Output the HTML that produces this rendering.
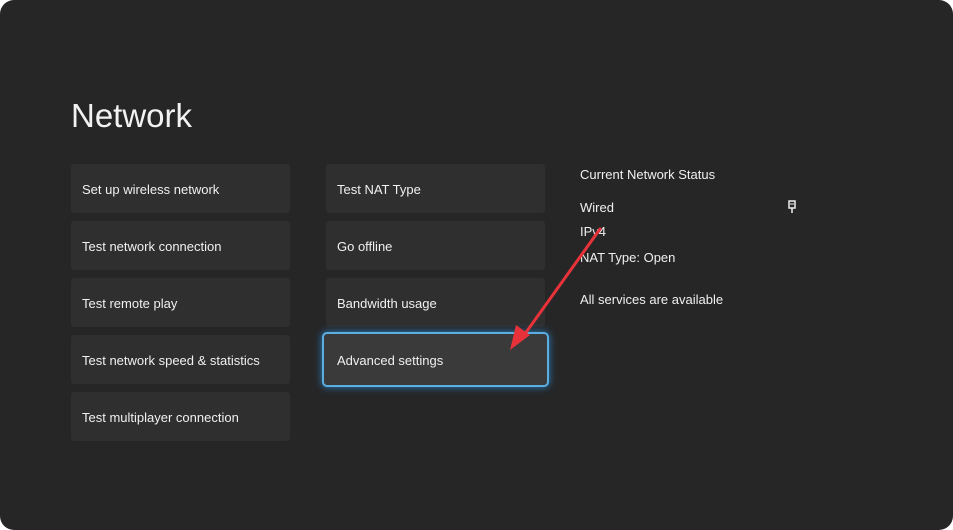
<!DOCTYPE html>
<html><head><style>
html,body{margin:0;padding:0;background:#fff;}
.frame{position:absolute;left:0;top:0;width:953px;height:530px;background:#262626;border-radius:14px;overflow:hidden;font-family:"Liberation Sans",sans-serif;color:#f0f0f0;}
h1{position:absolute;left:71px;top:97px;margin:0;font-weight:normal;font-size:33px;color:#f2f2f2;}
.t{position:absolute;width:219px;height:49px;background:#2f2f2f;border-radius:3px;font-size:13px;line-height:52px;box-sizing:border-box;padding-left:11px;}
.sel{left:322px;top:332px;width:227px;height:55px;background:#3a3a3a;border:2px solid #5aaee0;border-radius:5px;box-shadow:0 0 8px #2a7fc0;line-height:54px;padding-left:13px;}
.s{position:absolute;left:580px;font-size:13px;}
</style></head><body><div class="frame">
<h1>Network</h1>
<div class="t" style="left:71px;top:164px">Set up wireless network</div>
<div class="t" style="left:71px;top:221px">Test network connection</div>
<div class="t" style="left:71px;top:278px">Test remote play</div>
<div class="t" style="left:71px;top:335px">Test network speed &amp; statistics</div>
<div class="t" style="left:71px;top:392px">Test multiplayer connection</div>
<div class="t" style="left:326px;top:164px">Test NAT Type</div>
<div class="t" style="left:326px;top:221px">Go offline</div>
<div class="t" style="left:326px;top:278px">Bandwidth usage</div>
<div class="t sel">Advanced settings</div>
<div class="s" style="top:167px">Current Network Status</div>
<div class="s" style="top:200px">Wired</div>
<div class="s" style="top:224px">IPv4</div>
<div class="s" style="top:250px">NAT Type: Open</div>
<div class="s" style="top:292px">All services are available</div>
<svg style="position:absolute;left:786px;top:199px" width="12" height="16" viewBox="0 0 12 16"><rect x="3" y="2" width="6" height="7" fill="none" stroke="#eee" stroke-width="1.5"/><line x1="6" y1="9" x2="6" y2="14" stroke="#eee" stroke-width="1.5"/><line x1="5" y1="4" x2="5" y2="6" stroke="#eee"/><line x1="7" y1="4" x2="7" y2="6" stroke="#eee"/></svg>
<svg style="position:absolute;left:0;top:0" width="953" height="530"><line x1="600" y1="229" x2="522" y2="338" stroke="#e8323a" stroke-width="3" stroke-linecap="round"/><polygon points="510,350 516,325 530,335" fill="#e8323a"/></svg>
</div></body></html>
